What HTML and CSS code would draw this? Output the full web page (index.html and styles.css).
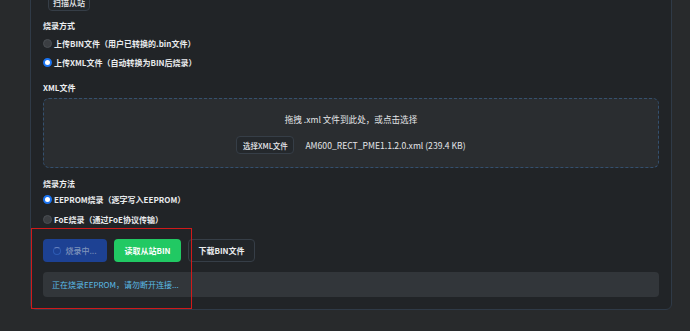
FILE: index.html
```html
<!DOCTYPE html>
<html lang="zh">
<head>
<meta charset="utf-8">
<link rel="stylesheet" href="styles.css">
</head>
<body>
<div class="page">
  <div class="card">
    <button class="btn btn-outline btn-top">扫描从站</button>

    <div class="label mt-label1">烧录方式</div>
    <label class="radio-row r1"><span class="radio"></span>上传BIN文件（用户已转换的.bin文件）</label>
    <label class="radio-row r2"><span class="radio checked"></span>上传XML文件（自动转换为BIN后烧录）</label>

    <div class="label mt-label2">XML文件</div>
    <div class="dropzone">
      <div class="drop-hint">拖拽 .xml 文件到此处，或点击选择</div>
      <div class="drop-row">
        <button class="btn btn-outline btn-small">选择XML文件</button>
        <span class="file-name">AM600_RECT_PME1.1.2.0.xml (239.4 KB)</span>
      </div>
    </div>

    <div class="label mt-label3">烧录方法</div>
    <label class="radio-row r3"><span class="radio checked"></span>EEPROM烧录（逐字写入EEPROM）</label>
    <label class="radio-row r4"><span class="radio"></span>FoE烧录（通过FoE协议传输）</label>

    <div class="actions">
      <button class="btn btn-busy"><span class="spinner"></span>烧录中...</button>
      <button class="btn btn-green">读取从站BIN</button>
      <button class="btn btn-outline btn-dl">下载BIN文件</button>
    </div>

    <div class="status">正在烧录EEPROM，请勿断开连接...</div>

    <div class="annotation"></div>
  </div>
</div>
</body>
</html>
```

FILE: styles.css
```css
* { box-sizing: border-box; }

html, body {
  margin: 0;
  padding: 0;
  height: 331px;
  overflow: hidden;
  background: #282a2c;
  font-family: "Noto Sans CJK SC", "Noto Sans", sans-serif;
  color: #e6e8ea;
}

.page {
  padding: 0 18px 0 30px;
}

.card {
  position: relative;
  margin-top: -20px;
  background: #212427;
  border: 1px solid #2f3a47;
  border-radius: 6px;
  padding: 12px 12px 12px 12px;
  display: flex;
  flex-direction: column;
  align-items: flex-start;
}

.btn {
  font-family: "Noto Sans CJK SC", "Noto Sans", sans-serif;
  font-size: 8px;
  font-weight: 500;
  border-radius: 4px;
  border: 1px solid transparent;
  display: inline-flex;
  align-items: center;
  justify-content: center;
  padding: 0;
  cursor: pointer;
}

.btn-outline {
  background: #23272b;
  border-color: #363e47;
  color: #e8eaec;
}

.btn-top {
  margin-left: 5px;
  width: 42px;
  height: 18px;
}

.label {
  font-size: 8px;
  font-weight: 700;
  line-height: 12px;
  height: 12px;
  color: #eceef0;
}
.mt-label1 { margin-top: 9px; }
.mt-label2 { margin-top: 13px; }
.mt-label3 { margin-top: 10px; }

.radio-row {
  display: flex;
  align-items: center;
  height: 14px;
  font-size: 8px;
  font-weight: 600;
  color: #e9ebed;
}
.r1 { margin-top: 4px; }
.r2 { margin-top: 5px; }
.r3 { margin-top: 2px; }
.r4 { margin-top: 6px; }

.radio {
  width: 9px;
  height: 9px;
  border-radius: 50%;
  background: #3b3e42;
  border: 1px solid #4a4e53;
  margin-right: 2px;
  flex: none;
}
.radio.checked {
  background: #ffffff;
  border: 2.5px solid #1a73f0;
}

.dropzone {
  margin-top: 4px;
  width: 100%;
  height: 70px;
  border: 1px dashed #34506f;
  border-radius: 6px;
  background: #2a2d30;
  display: flex;
  flex-direction: column;
  align-items: center;
  padding-top: 13px;
}

.drop-hint {
  font-size: 8.6px;
  line-height: 14px;
  color: #e4e6e8;
}

.drop-row {
  margin-top: 10px;
  display: flex;
  align-items: center;
  gap: 11px;
}

.btn-small {
  width: 58px;
  height: 18px;
  font-size: 7.5px;
  background: #24282c;
}

.file-name {
  font-size: 8.6px;
  color: #e4e6e8;
}

.actions {
  margin-top: 13px;
  display: flex;
  gap: 7px;
}

.actions .btn {
  height: 23px;
  font-size: 8px;
}

.btn-busy {
  width: 64px;
  background: #1d4193;
  color: #7f93bb;
  gap: 4px;
}

.spinner {
  width: 8px;
  height: 8px;
  border-radius: 50%;
  border: 1.2px solid #2e5bb4;
  border-top-color: #6b86c2;
  display: inline-block;
}

.btn-green {
  width: 67px;
  background: #21c963;
  color: #ffffff;
  font-weight: 700;
}

.btn-dl {
  width: 67px;
  background: #212529;
  color: #eceef0;
  font-weight: 700;
}

.status {
  margin-top: 10px;
  width: 100%;
  height: 25px;
  background: #32363a;
  border-radius: 4px;
  padding-left: 9px;
  display: flex;
  align-items: center;
  font-size: 8px;
  color: #5bbde8;
}

.annotation {
  position: absolute;
  left: 0px;
  top: 247px;
  width: 161px;
  height: 81px;
  border: 1px solid #d01a1a;
  pointer-events: none;
}
```
